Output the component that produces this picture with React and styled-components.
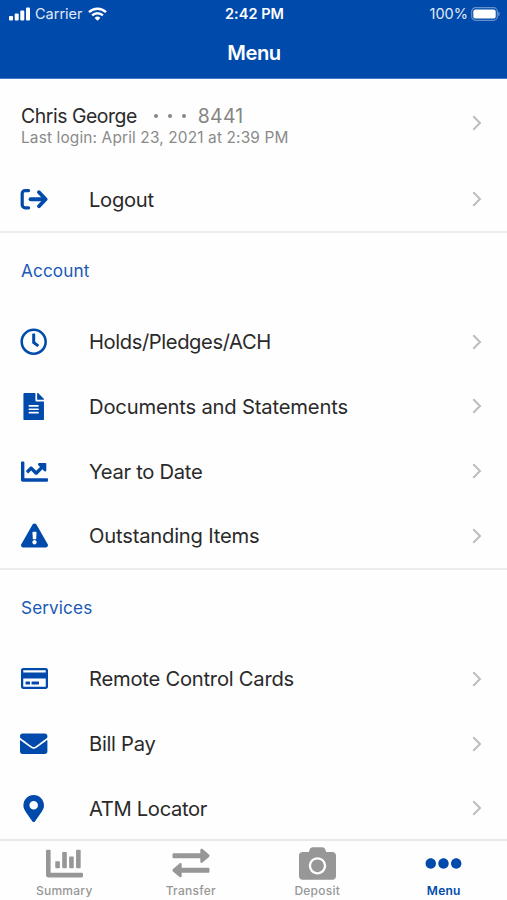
import styled, { createGlobalStyle } from "styled-components";
import {
  FaCamera,
  FaChartBar,
  FaChartLine,
  FaEllipsisH,
  FaEnvelope,
  FaExclamationTriangle,
  FaFileAlt,
  FaMapMarkerAlt,
  FaRegClock,
  FaRegCreditCard,
} from "react-icons/fa";

const GlobalStyle = createGlobalStyle`
  * {
    box-sizing: border-box;
  }

  body {
    margin: 0;
    background: #fff;
    font-family: Inter, "Liberation Sans", sans-serif;
    overflow: hidden;
  }
`;

const Screen = styled.div`
  display: flex;
  flex-direction: column;
  height: 900px;
  width: 507px;
  overflow: hidden;
  background: #fefefe;
`;

const Header = styled.header`
  flex: none;
  height: 79px;
  background: #004aab;
  border-bottom: 1px solid #3f7cc6;
  color: #fff;
`;

const StatusBar = styled.div`
  display: grid;
  grid-template-columns: 1fr auto 1fr;
  align-items: center;
  height: 27px;
  padding: 0 7px 0 9px;
`;

const StatusGroup = styled.div`
  display: flex;
  align-items: center;
  justify-content: ${(props) => (props.$end ? "flex-end" : "flex-start")};
  gap: ${(props) => (props.$end ? "3px" : "5px")};
`;

const StatusText = styled.span`
  font-size: 14.5px;
  line-height: 18px;
  opacity: 0.88;
`;

const Time = styled.span`
  font-size: 14.5px;
  line-height: 18px;
  font-weight: 600;
  letter-spacing: 0.05px;
`;

const Title = styled.h1`
  margin: 13px 0 0;
  padding-left: 1px;
  font-size: 20.2px;
  line-height: 25px;
  font-weight: 600;
  letter-spacing: -0.5px;
  text-align: center;
`;

const Content = styled.main`
  flex: 1;
  min-height: 0;
  overflow: hidden;
`;

const Section = styled.section`
  border-bottom: 2px solid #ececee;
`;

const Row = styled.div`
  display: flex;
  align-items: center;
  height: ${(props) => props.$height || "64.75px"};
  padding: 0 25px 0 20px;
`;

const IconCell = styled.div`
  display: flex;
  align-items: center;
  justify-content: center;
  width: 28px;
  height: 28px;
  margin-right: 41px;
  color: #004aab;

  svg {
    display: block;
  }
`;

const Label = styled.span`
  flex: 1;
  padding-top: 1px;
  font-size: 20.2px;
  line-height: 26px;
  color: #2a2a2a;
  white-space: nowrap;
  letter-spacing: ${(props) => props.$spacing || "-0.3px"};
`;

const Profile = styled.div`
  flex: 1;
  padding: 4px 0 0 1px;
`;

const ProfileLine = styled.div`
  display: flex;
  align-items: center;
  line-height: 24px;
`;

const Name = styled.span`
  font-size: 19.4px;
  color: #2a2a2a;
  letter-spacing: -0.45px;
`;

const Dots = styled.div`
  display: flex;
  gap: 10px;
  margin: 1px 12px 0 17px;
`;

const Dot = styled.i`
  width: 4px;
  height: 4px;
  border-radius: 50%;
  background: #858585;
`;

const Digits = styled.span`
  font-size: 19.4px;
  color: #858585;
  letter-spacing: 0.3px;
`;

const LastLogin = styled.div`
  font-size: 15.4px;
  line-height: 19px;
  letter-spacing: 0.15px;
  color: #8a8a8a;
`;

const SectionTitle = styled.h2`
  display: flex;
  align-items: center;
  height: 76.3px;
  margin: 0;
  padding: 0 21px 1px;
  font-size: 17.2px;
  font-weight: 400;
  letter-spacing: 0.1px;
  color: #1a5ab4;
`;

const TabBar = styled.nav`
  flex: none;
  display: grid;
  grid-template-columns: repeat(4, 1fr);
  height: 61px;
  padding-left: 1px;
  border-top: 2px solid #e9e9eb;
  background: #fefefe;
`;

const Tab = styled.div`
  display: flex;
  flex-direction: column;
  align-items: center;
  color: ${(props) => (props.$active ? "#004aab" : "#979797")};
`;

const TabIcon = styled.div`
  display: flex;
  align-items: center;
  height: 37px;
  margin-top: 3.5px;
`;

const TabLabel = styled.span`
  font-size: 12px;
  line-height: 16px;
  font-weight: ${(props) => (props.$active ? 600 : 500)};
  letter-spacing: 0.25px;
  margin-top: 1.5px;
`;

const Signal = () => (
  <svg width="21" height="14" viewBox="0 0 21 14" fill="#fff">
    <rect x="0" y="9" width="4" height="4.5" rx="1" />
    <rect x="5.7" y="6.5" width="4" height="7" rx="1" />
    <rect x="11.3" y="3.5" width="4" height="10" rx="1" />
    <rect x="17" y="0.5" width="4" height="13" rx="1" />
  </svg>
);

const Wifi = () => (
  <svg width="19" height="14" viewBox="0 0 19 14" fill="none" stroke="#fff">
    <path d="M1 5.2a12.2 12.2 0 0 1 17 0" strokeWidth="2.5" />
    <path d="M4.1 8.4a7.7 7.7 0 0 1 10.8 0" strokeWidth="2.4" />
    <path d="M9.5 13.8 6.6 10.9a4.1 4.1 0 0 1 5.8 0z" fill="#fff" stroke="none" />
  </svg>
);

const Battery = () => (
  <svg width="29" height="14" viewBox="0 0 29 14">
    <rect x="0.7" y="0.7" width="25.6" height="12.6" rx="3.8" fill="none" stroke="#fff" strokeOpacity="0.4" strokeWidth="1.2" />
    <rect x="2.3" y="2.4" width="22.4" height="9.2" rx="2.2" fill="#fff" />
    <path d="M27.4 4.8c1.6.5 1.6 3.9 0 4.4z" fill="#fff" fillOpacity="0.5" />
  </svg>
);

const LogoutIcon = () => (
  <svg width="28" height="28" viewBox="0 0 28 28" fill="none" stroke="currentColor" strokeWidth="3.2" strokeLinecap="round" strokeLinejoin="round">
    <path d="M8.6 5.6H5.2a3 3 0 0 0-3 3v11.2a3 3 0 0 0 3 3h3.4" />
    <path d="M10.6 14.2h14" strokeWidth="4" />
    <path d="M19 7.2l6.6 7-6.6 7" strokeWidth="3.8" />
  </svg>
);

const TransferIcon = () => (
  <svg width="38" height="30" viewBox="0 0 38 30" fill="currentColor">
    <path d="M1.8 5.2h26.5V2c0-1.2 1.3-1.8 2.2-1l6.5 5.6c.7.6.7 1.8 0 2.4l-6.5 5.6c-.9.8-2.2.2-2.2-1v-3.4H1.8c-.8 0-1.3-.5-1.3-1.3V6.5c0-.8.5-1.3 1.3-1.3z" />
    <path d="M36.2 19.7H9.7v-3.3c0-1.2-1.3-1.8-2.2-1L1 21c-.7.6-.7 1.8 0 2.400L7.500 29c.9.8 2.200.2 2.200-1v-3.300h26.500c.8 0 1.300-.5 1.300-1.300V21c0-.8-.5-1.300-1.300-1.300z" />
  </svg>
);

const Chevron = () => (
  <svg width="10" height="16" viewBox="0 0 10 16" fill="none" stroke="#bdbdbd" strokeWidth="2">
    <path d="M1.3 1.3 8 8l-6.7 6.7" />
  </svg>
);

const account = [
  { label: "Holds/Pledges/ACH", icon: <FaRegClock size={27.4} />, spacing: "-0.41px" },
  { label: "Documents and Statements", icon: <FaFileAlt size={27.4} />, spacing: "-0.18px" },
  { label: "Year to Date", icon: <FaChartLine size={27} /> },
  { label: "Outstanding Items", icon: <FaExclamationTriangle size={27} />, spacing: "-0.2px" },
];

const services = [
  { label: "Remote Control Cards", icon: <FaRegCreditCard size={27} />, spacing: "-0.24px" },
  { label: "Bill Pay", icon: <FaEnvelope size={27.4} /> },
  { label: "ATM Locator", icon: <FaMapMarkerAlt size={27.4} />, spacing: "-0.34px" },
];

const tabs = [
  { label: "Summary", icon: <FaChartBar size={37} /> },
  { label: "Transfer", icon: <TransferIcon /> },
  { label: "Deposit", icon: <FaCamera size={37} /> },
  { label: "Menu", icon: <FaEllipsisH size={37} />, active: true },
];

function MenuRow({ item, height }) {
  return (
    <Row $height={height}>
      <IconCell>{item.icon}</IconCell>
      <Label $spacing={item.spacing}>{item.label}</Label>
      <Chevron />
    </Row>
  );
}

export default function App() {
  return (
    <Screen>
      <GlobalStyle />
      <Header>
        <StatusBar>
          <StatusGroup>
            <Signal />
            <StatusText>Carrier</StatusText>
            <Wifi />
          </StatusGroup>
          <Time>2:42 PM</Time>
          <StatusGroup $end>
            <StatusText>100%</StatusText>
            <Battery />
          </StatusGroup>
        </StatusBar>
        <Title>Menu</Title>
      </Header>
      <Content>
        <Section>
          <Row $height="88px">
            <Profile>
              <ProfileLine>
                <Name>Chris George</Name>
                <Dots>
                  <Dot />
                  <Dot />
                  <Dot />
                </Dots>
                <Digits>8441</Digits>
              </ProfileLine>
              <LastLogin>Last login: April 23, 2021 at 2:39 PM</LastLogin>
            </Profile>
            <Chevron />
          </Row>
          <MenuRow item={{ label: "Logout", icon: <LogoutIcon /> }} height="64px" />
        </Section>
        <Section>
          <SectionTitle>Account</SectionTitle>
          {account.map((item) => (
            <MenuRow key={item.label} item={item} />
          ))}
        </Section>
        <Section>
          <SectionTitle>Services</SectionTitle>
          {services.map((item) => (
            <MenuRow key={item.label} item={item} />
          ))}
        </Section>
      </Content>
      <TabBar>
        {tabs.map((tab) => (
          <Tab key={tab.label} $active={tab.active}>
            <TabIcon>{tab.icon}</TabIcon>
            <TabLabel $active={tab.active}>{tab.label}</TabLabel>
          </Tab>
        ))}
      </TabBar>
    </Screen>
  );
}
